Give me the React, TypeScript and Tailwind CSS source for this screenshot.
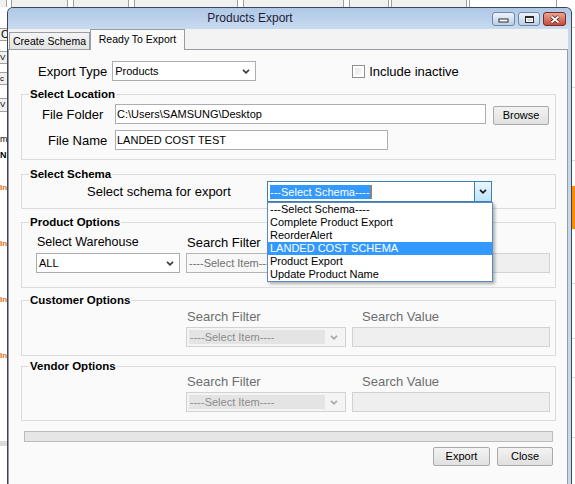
import React from "react";

type ComboKind = "normal" | "soft" | "disabled";

function Chevron({ color = "#3c3c3c" }: { color?: string }) {
  return (
    <svg width="8" height="5" viewBox="0 0 8 5" className="block">
      <path d="M1 0.8 L4 3.8 L7 0.8" fill="none" stroke={color} strokeWidth="1.7" />
    </svg>
  );
}

function Combo({ text, width, kind = "normal" }: { text: string; width: string; kind?: ComboKind }) {
  if (kind === "disabled") {
    return (
      <div className={`${width} h-[20px] flex border border-[#d2d2d2] bg-[#f4f4f4] p-[2px]`}>
        <div className="flex-1 bg-[#e4e4e4] text-[11px] leading-[14px] text-[#8c8c8c] pl-[1px] whitespace-nowrap overflow-hidden">
          {text}
        </div>
        <div className="w-[18px] flex items-center justify-center">
          <Chevron color="#a8a8a8" />
        </div>
      </div>
    );
  }
  const box =
    kind === "soft"
      ? "border-[#b5b5b5] bg-[#f7f7f7] text-[#707070]"
      : "border-[#abadb3] bg-white text-black";
  return (
    <div className={`${width} h-[20px] flex items-center border ${box}`}>
      <div className="flex-1 pl-[2px] text-[11px] leading-[18px] whitespace-nowrap overflow-hidden">{text}</div>
      <div className="w-[18px] flex items-center justify-center">
        <Chevron color={kind === "soft" ? "#8a8a8a" : "#3c3c3c"} />
      </div>
    </div>
  );
}

function TextBox({ value, width, disabled }: { value?: string; width: string; disabled?: boolean }) {
  return (
    <div
      className={`${width} h-[20px] border text-[11px] leading-[18px] pl-[1px] whitespace-nowrap overflow-hidden ${
        disabled ? "border-[#d2d2d2] bg-[#efefef]" : "border-[#abadb3] bg-white"
      }`}
    >
      {value}
    </div>
  );
}

function WinButton({ label, width }: { label: string; width: string }) {
  return (
    <button
      className={`${width} h-[19px] rounded-[2px] border border-[#a9a9a9] bg-gradient-to-b from-[#f3f3f3] to-[#e0e0e0] text-[11px] leading-[17px] text-black`}
    >
      {label}
    </button>
  );
}

function Group({ title, className, children }: { title: string; className: string; children: React.ReactNode }) {
  return (
    <fieldset className={`ml-[12px] w-[535px] border border-[#dcdcdc] ${className}`}>
      <legend className="ml-[7px] px-[1px] text-[11.5px] leading-[14px] font-bold text-black">{title}</legend>
      {children}
    </fieldset>
  );
}

function SearchRow({ filterLabelClass, disabled, first }: { filterLabelClass: string; disabled: boolean; first?: React.ReactNode }) {
  return (
    <div className="grid grid-cols-[144px_160px_198px] gap-x-[6px] pl-[14px]">
      {first ?? <div />}
      <div className={`pl-[1px] text-[13px] leading-[15px] ${filterLabelClass}`}>Search Filter</div>
      <div className={`pl-[10px] text-[13px] leading-[15px] ${filterLabelClass}`}>Search Value</div>
      <div className="col-span-3 h-[3px]" />
      <div>{first ? <Combo text="ALL" width="w-[144px]" /> : null}</div>
      <Combo text="----Select Item----" width="w-[160px]" kind={disabled ? "disabled" : "soft"} />
      <TextBox width="w-[198px]" disabled />
    </div>
  );
}

// the main application sitting behind the dialog
function Backdrop() {
  const boxTab = "h-[24px] -mt-[2px] border border-[#a0a0a0] bg-[#f0f0f0]";
  return (
    <div className="flex flex-col h-full">
      <div className="flex h-[7px] items-start">
        <div className={`w-[7px] ${boxTab} border-l-0`} />
        <div className={`ml-[4px] w-[57px] ${boxTab}`} />
        <div className={`ml-[5px] w-[56px] ${boxTab}`} />
        <div className={`ml-[5px] w-[104px] ${boxTab} border-[#707070]`} />
        <div className={`ml-[5px] w-[101px] ${boxTab}`} />
        <div className={`ml-[5px] w-[40px] ${boxTab}`} />
        <div className={`ml-[2px] w-[76px] ${boxTab}`} />
        <div className={`ml-[2px] w-[88px] ${boxTab} bg-white`} />
      </div>
      <div className="flex flex-1">
        <div className="w-[7px] flex flex-col overflow-hidden text-[11px] whitespace-nowrap bg-white">
          <div className="mt-[21px] h-[13px] border-y border-[#a0a0a0] bg-[#f0f0f0] leading-[11px] pl-[1px]">C</div>
          <div className="mt-[10px] h-[13px] border-y border-[#a0a0a0] bg-[#f0f0f0] leading-[11px] text-[8px]">V</div>
          <div className="mt-[8px] h-[13px] border-y border-[#a0a0a0] bg-[#f0f0f0] leading-[11px] text-[8px]">c</div>
          <div className="mt-[13px] h-[14px] border-y border-[#a0a0a0] bg-[#f0f0f0] leading-[12px] text-[8px]">V</div>
          <div className="mt-[22px] leading-[10px] text-[9px]">m</div>
          <div className="mt-[6px] leading-[10px] font-bold text-[9px]">N</div>
          <div className="mt-[22px] leading-[11px] font-bold text-[8px] text-[#e0701a]">In</div>
          <div className="mt-[45px] leading-[11px] font-bold text-[8px] text-[#e0701a]">In</div>
          <div className="mt-[45px] leading-[11px] font-bold text-[8px] text-[#e0701a]">In</div>
          <div className="mt-[45px] leading-[11px] font-bold text-[8px] text-[#e0701a]">In</div>
          <div className="mt-[80px] h-[5px] bg-[#dcdcdc]" />
        </div>
        <div className="flex-1" />
        <div className="w-[3px] flex flex-col bg-white">
          <div className="mt-[20px] h-px bg-[#d9d9d9]" />
          <div className="mt-[59px] h-px bg-[#d9d9d9]" />
          <div className="mt-[72px] h-px bg-[#d9d9d9]" />
          <div className="mt-[25px] h-[43px] bg-[#ff8a00]" />
          <div className="mt-[54px] h-px bg-[#d9d9d9]" />
          <div className="mt-[54px] h-px bg-[#d9d9d9]" />
          <div className="mt-[38px] h-px bg-[#d9d9d9]" />
          <div className="mt-[59px] h-px bg-[#d9d9d9]" />
        </div>
      </div>
    </div>
  );
}

function TitleBar() {
  const capBtn = "h-[14px] rounded-[3px] border flex items-center justify-center";
  return (
    <div className="flex h-[21px] bg-gradient-to-b from-[#afc8e6] to-[#c8dbef] rounded-t-[5px]">
      <div className="flex-1 text-center text-[12px] leading-[21px] text-[#1d1d3a]">Products Export</div>
      <div className="flex gap-[3px] pt-[4px] pr-[5px]">
        <div className={`w-[23px] ${capBtn} border-[#6f87a8] bg-gradient-to-b from-[#eef3fa] to-[#bccfe6]`}>
          <svg width="11" height="8" viewBox="0 0 11 8">
            <rect x="1" y="4" width="9" height="3" fill="#fff" stroke="#2b2b2b" strokeWidth="1" />
          </svg>
        </div>
        <div className={`w-[22px] ${capBtn} border-[#6f87a8] bg-gradient-to-b from-[#eef3fa] to-[#bccfe6]`}>
          <svg width="11" height="9" viewBox="0 0 11 9">
            <rect x="1.5" y="1.5" width="8" height="6" fill="#fff" stroke="#2b2b2b" strokeWidth="1" />
            <rect x="1.5" y="1.5" width="8" height="1.5" fill="#2b2b2b" />
            <rect x="3.5" y="4" width="4" height="2" fill="#c9d6e6" />
          </svg>
        </div>
        <div className={`w-[23px] ${capBtn} border-[#7a2a1f] bg-gradient-to-b from-[#e9a596] to-[#c5493a]`}>
          <svg width="12" height="9" viewBox="0 0 12 9">
            <path d="M2.5 1.5 L9.5 7.5 M9.5 1.5 L2.5 7.5" stroke="#4a1a14" strokeWidth="3.4" />
            <path d="M2.5 1.5 L9.5 7.5 M9.5 1.5 L2.5 7.5" stroke="#ffffff" strokeWidth="1.8" />
          </svg>
        </div>
      </div>
    </div>
  );
}

const schemas = [
  "---Select Schema----",
  "Complete Product Export",
  "ReorderAlert",
  "LANDED COST SCHEMA",
  "Product Export",
  "Update Product Name",
];

export default function App() {
  return (
    <div className="relative w-[575px] h-[484px] overflow-hidden bg-white font-['Liberation_Sans',Arial,Helvetica,sans-serif] text-black">
      <Backdrop />

      <div className="absolute left-[7px] top-[7px] w-[565px] h-[490px] flex flex-col rounded-t-[6px] border border-b-0 border-[#3a4656] bg-[#c5d8ee]">
        <TitleBar />
        <div className="flex flex-1">
          <div className="w-[560px] flex flex-col bg-[#f3f3f3]">
            {/* tabs */}
            <div className="flex h-[20px] items-end">
              <div className="ml-[1px] w-[81px] h-[17px] border border-b-0 border-[#9a9ca3] bg-gradient-to-b from-[#f4f4f4] to-[#e4e4e4] text-[10.5px] leading-[16px] text-center">
                Create Schema
              </div>
              <div className="relative z-10 -mb-px w-[95px] h-[21px] border border-b-0 border-[#9a9ca3] bg-[#fafafa] text-[10.5px] leading-[19px] text-center">
                Ready To Export
              </div>
            </div>

            {/* tab panel */}
            <div className="flex-1 flex flex-col border border-[#9a9ca3] bg-[#fafafa]">
              <div className="mt-[11px] h-[20px] flex items-center pl-[29px]">
                <span className="text-[13px] leading-[15px]">Export Type</span>
                <div className="ml-[5px]">
                  <Combo text="Products" width="w-[144px]" />
                </div>
                <div className="ml-[96px] w-[13px] h-[13px] border border-[#8f8f8f] bg-white p-[2px]">
                  <div className="w-full h-full bg-gradient-to-br from-[#e6e6e6] to-[#fbfbfb]" />
                </div>
                <span className="ml-[4px] text-[13px] leading-[15px]">Include inactive</span>
              </div>

              <Group title="Select Location" className="mt-[6px] pt-[3px] pb-[9px]">
                <div className="flex items-center h-[20px]">
                  <span className="w-[93px] pl-[20px] text-[13px] leading-[15px]">File Folder</span>
                  <TextBox value="C:\Users\SAMSUNG\Desktop" width="w-[371px]" />
                  <div className="ml-[7px]">
                    <WinButton label="Browse" width="w-[56px]" />
                  </div>
                </div>
                <div className="mt-[6px] flex items-center h-[20px]">
                  <span className="w-[93px] pl-[26px] text-[13px] leading-[15px]">File Name</span>
                  <TextBox value="LANDED COST TEST" width="w-[273px]" />
                </div>
              </Group>

              <Group title="Select Schema" className="mt-[7px] pb-[6px]">
                <div className="flex items-center h-[21px] pl-[65px]">
                  <span className="w-[180px] text-[13px] leading-[15px]">Select schema for export</span>
                  <div className="relative w-[225px] h-[21px]">
                    <div className="w-full h-full flex border border-[#3c7fb1] bg-white">
                      <div className="flex-1 flex items-center pl-[2px]">
                        <span className="bg-[#3399ff] text-white text-[11px] leading-[14px] pr-[1px] border-r border-[#e07000]">
                          {schemas[0]}
                        </span>
                      </div>
                      <div className="w-[17px] flex items-center justify-center border-l border-[#3c7fb1] bg-gradient-to-b from-[#eaf6fd] to-[#bfe4f9]">
                        <Chevron color="#1a1a1a" />
                      </div>
                    </div>
                    <div className="absolute left-0 top-[21px] z-20 w-[226px] border border-[#5d8bc7] bg-white shadow-[2px_2px_3px_rgba(0,0,0,0.3)]">
                      {schemas.map((s, i) => (
                        <div
                          key={s}
                          className={`h-[13px] pl-[2px] text-[11px] leading-[13px] whitespace-nowrap ${
                            i === 3 ? "bg-[#3399ff] text-white" : "text-black"
                          }`}
                        >
                          {s}
                        </div>
                      ))}
                    </div>
                  </div>
                </div>
              </Group>

              <Group title="Product Options" className="mt-[6px] pt-[6px] pb-[14px]">
                <SearchRow
                  filterLabelClass="text-black"
                  disabled={false}
                  first={<div className="pl-[1px] text-[12.5px] leading-[15px]">Select Warehouse</div>}
                />
              </Group>

              <Group title="Customer Options" className="mt-[5px] pt-[2px] pb-[8px]">
                <SearchRow filterLabelClass="text-[#6d6d6d]" disabled />
              </Group>

              <Group title="Vendor Options" className="mt-[3px] pt-[1px] pb-[8px]">
                <SearchRow filterLabelClass="text-[#6d6d6d]" disabled />
              </Group>

              <div className="mt-[10px] ml-[15px] w-[529px] h-[11px] border border-[#bcbcbc] bg-[#e6e6e6]" />

              <div className="mt-[5px] flex justify-end gap-[7px] pr-[14px]">
                <WinButton label="Export" width="w-[57px]" />
                <WinButton label="Close" width="w-[56px]" />
              </div>
            </div>
          </div>
        </div>
      </div>
    </div>
  );
}
